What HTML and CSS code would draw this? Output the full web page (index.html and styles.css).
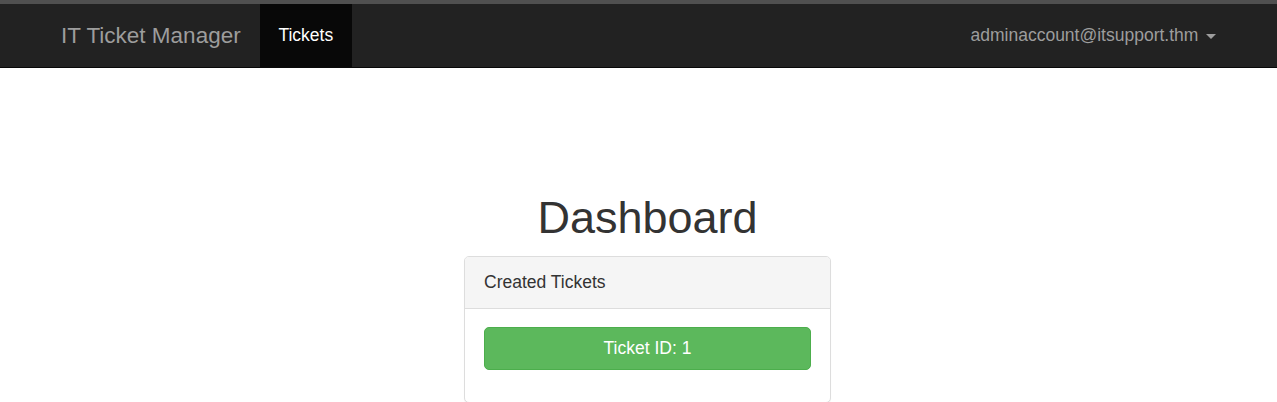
FILE: index.html
```html
<!DOCTYPE html>
<html lang="en">
<head>
<meta charset="utf-8">
<title>IT Ticket Manager</title>
<link rel="stylesheet" href="styles.css">
</head>
<body>
<div class="topstrip"></div>
<nav class="navbar">
  <div class="nav-left">
    <a class="brand" href="#">IT Ticket Manager</a>
    <a class="nav-link active" href="#">Tickets</a>
  </div>
  <div class="nav-right">
    <a class="nav-link user" href="#">adminaccount@itsupport.thm <span class="caret"></span></a>
  </div>
</nav>
<main class="content">
  <h1 class="title">Dashboard</h1>
  <section class="panel">
    <div class="panel-heading">Created Tickets</div>
    <div class="panel-body">
      <a class="btn-success" href="#">Ticket ID: 1</a>
    </div>
  </section>
</main>
</body>
</html>
```
FILE: styles.css
```css
html, body {
  margin: 0;
  padding: 0;
  background: #fff;
  font-family: "Liberation Sans", Arial, Helvetica, sans-serif;
  font-size: 17.5px;
  line-height: 25px;
  color: #333;
}
a { text-decoration: none; }

.topstrip {
  height: 4px;
  background: #505050;
}

.navbar {
  display: flex;
  justify-content: space-between;
  align-items: stretch;
  height: 63px;
  background: #222;
  border-bottom: 1px solid #080808;
  padding: 0 42px;
}
.nav-left, .nav-right {
  display: flex;
  align-items: stretch;
}
.brand {
  display: block;
  padding: 19px 19px;
  font-size: 22.5px;
  line-height: 25px;
  color: #9d9d9d;
}
.nav-link {
  display: block;
  padding: 19px 18.75px;
  color: #9d9d9d;
  line-height: 25px;
}
.nav-link.active {
  background: #080808;
  color: #fff;
}
.caret {
  display: inline-block;
  width: 0;
  height: 0;
  margin-left: 3px;
  vertical-align: middle;
  border-top: 5px solid #9d9d9d;
  border-left: 5px solid transparent;
  border-right: 5px solid transparent;
}

.content {
  display: flex;
  flex-direction: column;
  align-items: center;
  padding-top: 125px;
  padding-left: 18px;
}
.title {
  margin: 0 0 13px;
  font-size: 45px;
  line-height: 49.5px;
  font-weight: 500;
  color: #333;
}
.panel {
  width: 365px;
  border: 1px solid #ddd;
  border-radius: 5px;
  background: #fff;
  box-shadow: 0 1px 1px rgba(0,0,0,0.05);
}
.panel-heading {
  padding: 13px 19px 13px;
  background: #f5f5f5;
  border-bottom: 1px solid #ddd;
  border-radius: 4px 4px 0 0;
  color: #333;
}
.panel-body {
  padding: 18.75px 19px;
}
.btn-success {
  display: block;
  padding: 8px 15px;
  margin-bottom: 12.5px;
  background: #5cb85c;
  border: 1px solid #4cae4c;
  border-radius: 5px;
  color: #fff;
  text-align: center;
}
```
